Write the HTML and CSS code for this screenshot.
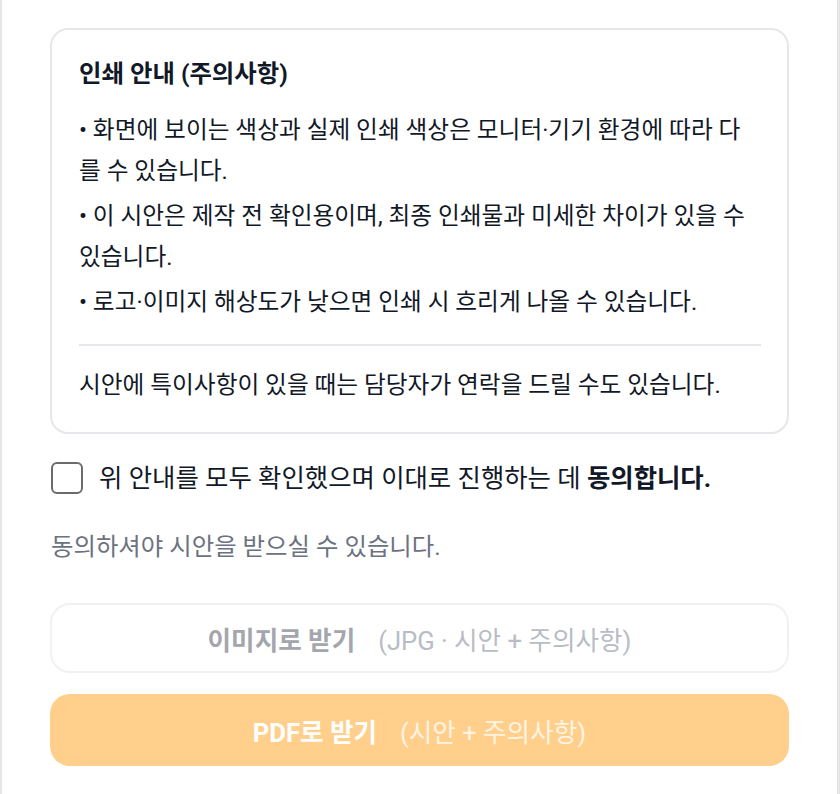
FILE: index.html
```html
<!DOCTYPE html>
<html lang="ko">

<head>
    <meta charset="UTF-8">
    <meta name="viewport" content="width=device-width, initial-scale=1.0">
    <title>시안 받기</title>
    <link rel="stylesheet" href="styles.css">
</head>

<body>
    <div class="page">
        <div class="notice-card">
            <h2 class="notice-title">인쇄 안내 (주의사항)</h2>
            <div class="notice-list">
                <p>• 화면에 보이는 색상과 실제 인쇄 색상은 모니터·기기 환경에 따라 다를 수 있습니다.</p>
                <p>• 이 시안은 제작 전 확인용이며, 최종 인쇄물과 미세한 차이가 있을 수 있습니다.</p>
                <p>• 로고·이미지 해상도가 낮으면 인쇄 시 흐리게 나올 수 있습니다.</p>
            </div>
            <div class="notice-foot">시안에 특이사항이 있을 때는 담당자가 연락을 드릴 수도 있습니다.</div>
        </div>

        <label class="agree">
            <input type="checkbox" id="agreeCheck">
            <span class="agree-box"></span>
            <span class="agree-text">위 안내를 모두 확인했으며 이대로 진행하는 데 <b>동의합니다.</b></span>
        </label>

        <p class="agree-hint" id="agreeHint">동의하셔야 시안을 받으실 수 있습니다.</p>

        <div class="actions">
            <button class="btn btn-image" id="btnImage" disabled>
                <span class="btn-label">이미지로 받기</span>
                <span class="btn-sub">(JPG · 시안 + 주의사항)</span>
            </button>
            <button class="btn btn-pdf" id="btnPdf" disabled>
                <span class="btn-label">PDF로 받기</span>
                <span class="btn-sub">(시안 + 주의사항)</span>
            </button>
        </div>
    </div>
</body>

</html>
```

FILE: styles.css
```css
* {
    box-sizing: border-box;
}

html,
body {
    margin: 0;
    padding: 0;
    background: #fff;
}

body {
    font-family: Roboto, "Noto Sans CJK KR", sans-serif;
    color: #111827;
}

.page {
    min-height: 100vh;
    border-left: 2px solid #e5e5ea;
    border-right: 3px solid #e5e5ea;
    padding: 28px 48px 20px 48px;
}

.notice-card {
    border: 2px solid #e5e7eb;
    border-radius: 18px;
    padding: 24px 26px 27px 27px;
}

.notice-title {
    margin: 0 0 16px;
    font-size: 24.4px;
    font-weight: 700;
    line-height: 40px;
}

.notice-list {
    display: flex;
    flex-direction: column;
    gap: 4px;
    padding-bottom: 21px;
    border-bottom: 2px solid #e5e7eb;
}

.notice-list p {
    margin: 0;
    font-size: 23.7px;
    line-height: 41px;
}

.notice-foot {
    margin-top: 19px;
    font-size: 23.7px;
    line-height: 40px;
}

.agree {
    display: flex;
    align-items: center;
    margin-top: 28px;
    cursor: pointer;
}

.agree input {
    display: none;
}

.agree-box {
    flex: none;
    width: 32px;
    height: 32px;
    border: 2px solid #6b6b6b;
    border-radius: 6px;
    margin: 0 16px 0 1px;
    background: #fff;
}

.agree input:checked+.agree-box {
    background: #ff9f1a;
    border-color: #ff9f1a;
}

.agree-text {
    font-size: 25.4px;
    line-height: 32px;
}

.agree-text b {
    font-weight: 700;
}

.agree-hint {
    margin: 38px 0 0 1px;
    font-size: 24.4px;
    line-height: 30px;
    color: #6b7280;
}

.actions {
    display: flex;
    flex-direction: column;
    gap: 21px;
    margin-top: 41px;
}

.btn {
    display: flex;
    align-items: center;
    justify-content: center;
    gap: 23px;
    width: 100%;
    border-radius: 20px;
    font-family: Roboto, "Noto Sans CJK KR", sans-serif;
    font-size: 25.6px;
    cursor: pointer;
}

.btn-label {
    font-weight: 700;
}

.btn-image {
    height: 70px;
    background: #fff;
    border: 2px solid #f1f1f4;
    color: #a3a6ad;
}

.btn-image .btn-sub {
    color: #b8bcc4;
}

.btn-pdf {
    height: 72px;
    background: #ffcf8b;
    border: none;
    color: #fff;
}

.btn-pdf .btn-sub {
    color: #fff4e3;
}
```
